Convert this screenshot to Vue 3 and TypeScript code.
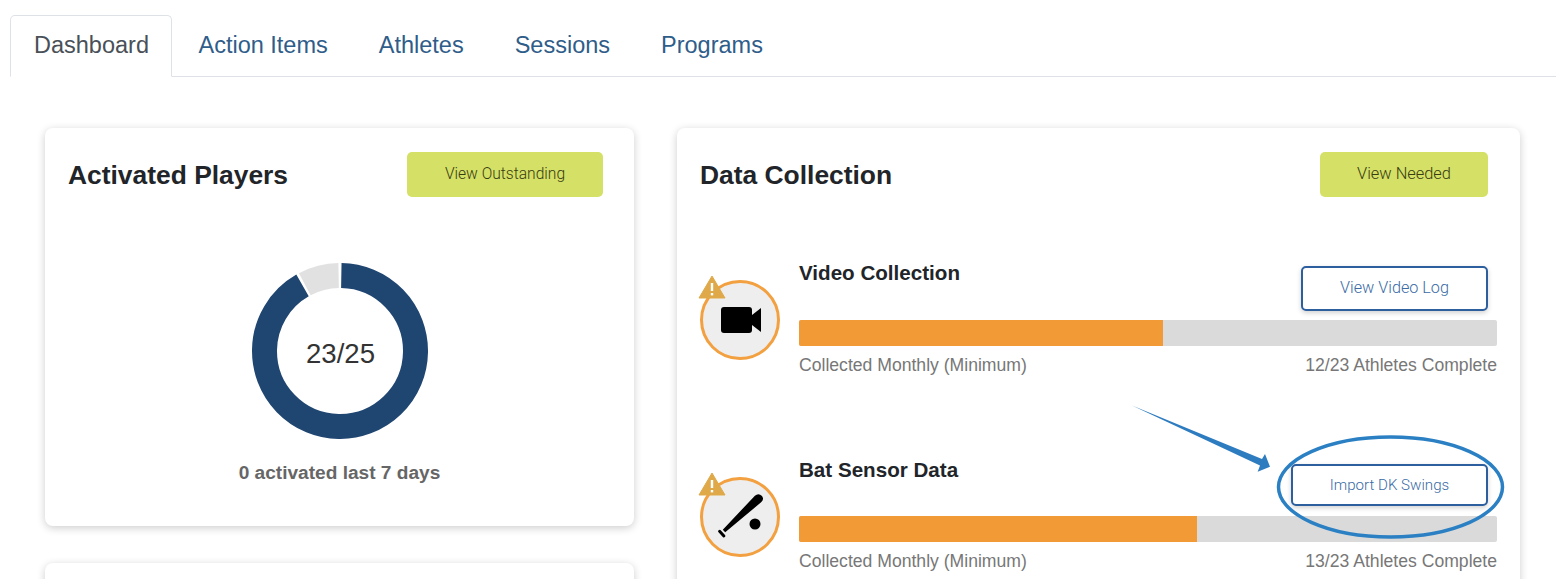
<template>
  <div class="page">
    <nav class="tabs">
      <a
        v-for="(tab, i) in tabs"
        :key="tab"
        class="tab"
        :class="{ active: i === 0 }"
      >{{ tab }}</a>
    </nav>

    <main class="board">
      <div class="col-left">
        <section class="card players">
          <header class="card-head">
            <h2>Activated Players</h2>
            <button class="btn lime outstanding">View Outstanding</button>
          </header>
          <div class="donut">
            <svg width="176" height="176" viewBox="0 0 176 176">
              <circle
                class="ring-bg"
                cx="88"
                cy="88"
                r="75.5"
                pathLength="360"
                :stroke-dasharray="`${restDeg} 360`"
                :transform="`rotate(${restStart} 88 88)`"
              />
              <circle
                class="ring-val"
                cx="88"
                cy="88"
                r="75.5"
                pathLength="360"
                :stroke-dasharray="`${valueDeg} 360`"
                transform="rotate(-89 88 88)"
              />
            </svg>
            <span class="donut-label">{{ activated }}/{{ total }}</span>
          </div>
          <p class="note">0 activated last 7 days</p>
        </section>
        <section class="card stub"></section>
      </div>

      <section class="card collection">
        <header class="card-head">
          <h2>Data Collection</h2>
          <button class="btn lime needed">View Needed</button>
        </header>

        <div v-for="row in rows" :key="row.title" class="row" :class="row.kind">
          <div class="badge">
            <svg v-if="row.kind === 'video'" class="glyph" width="74" height="74" viewBox="0 0 74 74">
              <rect x="18" y="24" width="31" height="26" rx="3" />
              <path d="M49 32 L58 25 V49 L49 42 Z" />
            </svg>
            <svg v-else class="glyph" width="74" height="74" viewBox="0 0 74 74">
              <path d="M51.9 15.7 Q55.5 12.5 59 16 Q61.5 19.5 58.1 22.3 L22.2 52.3 L19.8 49.7 Z" />
              <path d="M16.6 51.3 L20.9 55.9" stroke="#000" stroke-width="3" stroke-linecap="round" />
              <circle cx="52" cy="44" r="5.5" />
            </svg>
            <svg class="warn" width="28" height="24" viewBox="0 0 28 24">
              <path d="M14 1 L27 23 H1 Z" fill="#dfa94a" stroke="#dfa94a" stroke-width="1" stroke-linejoin="round" />
              <rect x="12.8" y="8" width="2.4" height="8" fill="#fff" />
              <rect x="12.8" y="18" width="2.4" height="2.4" fill="#fff" />
            </svg>
          </div>
          <div class="body">
            <div class="row-head">
              <h3>{{ row.title }}</h3>
              <button class="btn outline">{{ row.action }}</button>
            </div>
            <div class="bar">
              <div class="fill" :style="{ width: row.pct + '%' }"></div>
            </div>
            <div class="caption">
              <span>Collected Monthly (Minimum)</span>
              <span>{{ row.done }}/{{ total - 2 }} Athletes Complete</span>
            </div>
          </div>
        </div>
      </section>
    </main>

    <svg class="markup" width="1559" height="579" viewBox="0 0 1559 579">
      <ellipse cx="1390.5" cy="487" rx="112" ry="50" fill="none" stroke="#2b80c4" stroke-width="3.5" />
      <path d="M1132 405.5 L1262 459 L1265 454 L1270 466.7 L1257.7 471.7 L1260 465.5 Z" fill="#2e7cc0" />
    </svg>
  </div>
</template>

<script setup lang="ts">
import { computed } from "vue";

type Row = {
  title: string;
  action: string;
  done: number;
  pct: number;
  kind: "video" | "bat";
};

const tabs = ["Dashboard", "Action Items", "Athletes", "Sessions", "Programs"];

const activated = 23;
const total = 25;

const rows: Row[] = [
  { title: "Video Collection", action: "View Video Log", done: 12, pct: 52.15, kind: "video" },
  { title: "Bat Sensor Data", action: "Import DK Swings", done: 13, pct: 57, kind: "bat" },
];

const valueDeg = computed(() => (activated / total) * 360 - 2);
const restDeg = computed(() => 360 - (activated / total) * 360 - 2);
const restStart = computed(() => -90 + (activated / total) * 360 + 1);
</script>

<style>
html,
body {
  margin: 0;
  background: #fff;
  overflow: hidden;
}
</style>

<style scoped>
.page {
  position: relative;
  width: 1559px;
  height: 579px;
  overflow: hidden;
  font-family: "Liberation Sans", Arial, sans-serif;
  color: #212529;
}

.tabs {
  display: flex;
  margin: 15px 3px 0 10px;
  height: 61px;
  border-bottom: 1px solid #dee2e6;
}

.tab {
  box-sizing: border-box;
  height: 62px;
  padding: 0 24.5px 2px;
  display: flex;
  align-items: center;
  font-size: 23.5px;
  color: #2f5d8a;
  border: 1px solid transparent;
  border-radius: 5px 5px 0 0;
}

.tab.active {
  padding: 0 22px 2px 23px;
  margin-right: 1px;
  color: #495057;
  background: #fff;
  border-color: #dee2e6 #dee2e6 #fff;
}

.board {
  display: flex;
  align-items: flex-start;
  gap: 43px;
  padding: 51px 0 0 45px;
}

.col-left {
  width: 589px;
  display: flex;
  flex-direction: column;
  gap: 37px;
}

.card {
  box-sizing: border-box;
  background: #fff;
  border-radius: 8px;
  box-shadow: 0 2px 9px rgba(0, 0, 0, 0.2);
  padding: 24px 31px 0 23px;
}

.players {
  height: 398px;
}

.stub {
  height: 120px;
}

.collection {
  width: 843px;
  height: 600px;
  padding-right: 32px;
}

.card-head {
  display: flex;
  align-items: center;
  justify-content: space-between;
}

h2 {
  margin: 2px 0 0;
  font-size: 26.4px;
  font-weight: 700;
}

.btn {
  box-sizing: border-box;
  height: 45px;
  padding: 0 0 2px;
  border-radius: 5px;
  font-family: Roboto, "Liberation Sans", sans-serif;
  font-weight: 300;
  font-size: 15.6px;
}

.lime {
  background: #d4e066;
  border: none;
  color: #383c12;
}

.outstanding {
  width: 196px;
}

.needed {
  width: 168px;
  font-size: 16.4px;
}

.donut {
  position: relative;
  width: 176px;
  height: 176px;
  margin: 66px auto 0;
  left: 4px;
}

.donut svg {
  display: block;
}

.donut circle {
  fill: none;
  stroke-width: 25;
}

.ring-bg {
  stroke: #e1e1e1;
}

.ring-val {
  stroke: #1f4571;
}

.donut-label {
  position: absolute;
  inset: 0;
  padding: 6px 0 0 2px;
  display: flex;
  align-items: center;
  justify-content: center;
  font-size: 27.6px;
  color: #333;
}

.note {
  margin: 22px 0 0 8px;
  text-align: center;
  font-size: 19.1px;
  line-height: 24px;
  font-weight: 700;
  color: #666;
}

.row {
  display: flex;
  gap: 19px;
  width: 797px;
}

.row.video {
  margin-top: 64px;
}

.row.bat {
  margin-top: 82px;
}

.badge {
  position: relative;
  box-sizing: border-box;
  flex: none;
  width: 80px;
  height: 80px;
  margin-top: 19px;
  border: 3px solid #f2a040;
  border-radius: 50%;
  background: #eee;
}

.glyph {
  display: block;
  fill: #000;
}

.warn {
  position: absolute;
  left: -5px;
  top: -8px;
}

.body {
  flex: 1;
  min-width: 0;
}

.row-head {
  display: flex;
  justify-content: space-between;
  align-items: flex-start;
}

h3 {
  margin: 0;
  font-size: 20.6px;
  line-height: 24px;
  font-weight: 700;
}

.outline {
  margin: 5px 9px 9px 0;
  width: 187px;
  background: #fff;
  border: 2px solid #2d5f9e;
  color: #3a6ba5;
  font-size: 16.2px;
  box-shadow: 0 2px 5px rgba(0, 0, 0, 0.18);
}

.bat .outline {
  margin: 6px 9px 10px 0;
  width: 197px;
  height: 42px;
  padding: 0 0 0 0;
  font-size: 15.1px;
}

.bar {
  height: 26px;
  border-radius: 2px;
  background: #dadada;
  overflow: hidden;
}

.fill {
  height: 100%;
  background: #f29a36;
}

.caption {
  display: flex;
  justify-content: space-between;
  margin-top: 8px;
  font-size: 17.6px;
  line-height: 22px;
  color: #777;
}

.markup {
  position: absolute;
  left: 0;
  top: 0;
  pointer-events: none;
}
</style>
